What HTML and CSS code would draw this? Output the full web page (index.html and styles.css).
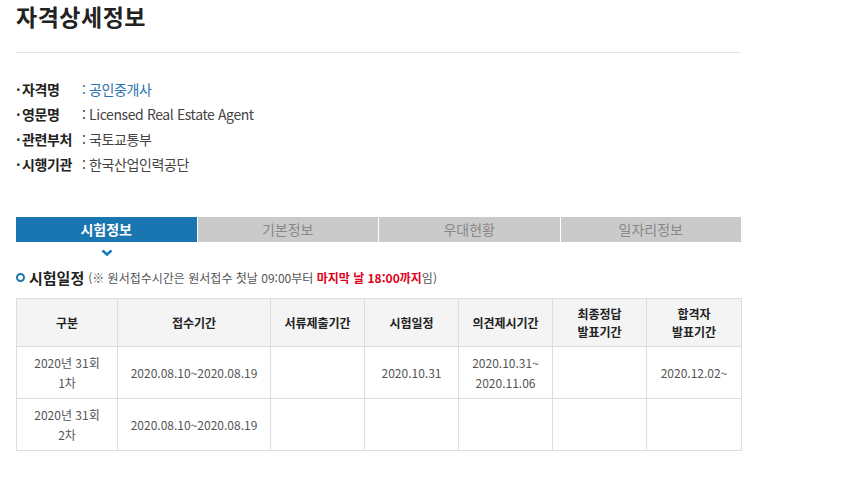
FILE: index.html
```html
<!DOCTYPE html>
<html lang="ko">
<head>
<meta charset="utf-8">
<link rel="stylesheet" href="styles.css">
</head>
<body>
<div class="page">
  <h1 class="title">자격상세정보</h1>
  <ul class="info">
    <li><span class="label">자격명</span><span class="val link">: 공인중개사</span></li>
    <li><span class="label">영문명</span><span class="val">: Licensed Real Estate Agent</span></li>
    <li><span class="label">관련부처</span><span class="val">: 국토교통부</span></li>
    <li><span class="label">시행기관</span><span class="val">: 한국산업인력공단</span></li>
  </ul>
  <div class="tabs">
    <div class="tab active">시험정보</div>
    <div class="tab">기본정보</div>
    <div class="tab">우대현황</div>
    <div class="tab">일자리정보</div>
  </div>
  <div class="chev-row">
    <svg class="chev" width="12" height="8" viewBox="0 0 12 8"><path d="M1.5 1.5 L6 5.5 L10.5 1.5" fill="none" stroke="#1a7ab8" stroke-width="2.6"/></svg>
  </div>
  <div class="sched-head">
    <span class="bullet"></span><span class="sched-title">시험일정</span>
    <span class="note">(※ 원서접수시간은 원서접수 첫날 09:00부터 <b class="red">마지막 날 18:00까지</b>임)</span>
  </div>
  <table class="sched">
    <colgroup>
      <col class="c1"><col class="c2"><col class="c3"><col class="c4"><col class="c5"><col class="c6"><col class="c7">
    </colgroup>
    <thead>
      <tr><th>구분</th><th>접수기간</th><th>서류제출기간</th><th>시험일정</th><th>의견제시기간</th><th>최종정답<br>발표기간</th><th>합격자<br>발표기간</th></tr>
    </thead>
    <tbody>
      <tr><td>2020년 31회<br>1차</td><td>2020.08.10~2020.08.19</td><td></td><td>2020.10.31</td><td>2020.10.31~<br>2020.11.06</td><td></td><td>2020.12.02~</td></tr>
      <tr><td>2020년 31회<br>2차</td><td>2020.08.10~2020.08.19</td><td></td><td></td><td></td><td></td><td></td></tr>
    </tbody>
  </table>
</div>
</body>
</html>
```
FILE: styles.css
```css
html, body { margin: 0; padding: 0; background: #fff; }
body { font-family: "Noto Sans CJK KR", "Noto Sans", sans-serif; color: #333; }
.page { width: 725px; padding: 0 0 0 16px; }
.title { margin: 0; padding-top: 0; height: 52px; line-height: 32px; font-size: 23px; font-weight: 700; color: #222; border-bottom: 1px solid #e5e5e5; letter-spacing: 0.5px; }
.info { list-style: none; margin: 24px 0 0; padding: 0; }
.info li { height: 25px; line-height: 25px; font-size: 14px; display: flex; letter-spacing: -0.4px; }
.info li::before { content: "·"; width: 6px; font-weight: 700; color: #333; }
.label { width: 60px; font-weight: 700; color: #222; }
.val { color: #444; font-weight: 400; }
.val.link { color: #2a73b0; }
.tabs { display: flex; margin-top: 40px; gap: 1px; }
.tab { flex: 1; height: 25px; line-height: 25px; text-align: center; background: #cacaca; color: #888; font-size: 14px; }
.tab.active { background: #1a76b0; color: #fff; font-weight: 700; }
.chev-row { height: 22px; width: 181px; display: flex; justify-content: center; align-items: flex-start; padding-top: 7px; box-sizing: border-box; }
.sched-head { display: flex; align-items: center; height: 26px; font-size: 12px; color: #555; }
.bullet { width: 5px; height: 5px; border: 2px solid #1a76b0; border-radius: 50%; margin-right: 4px; }
.sched-title { font-size: 15px; font-weight: 700; color: #222; margin-right: 4px; }
.red { color: #e1001b; font-weight: 700; }
.sched { margin-top: 8px; width: 725px; border-collapse: collapse; table-layout: fixed; font-size: 12px; }
.sched th, .sched td { border: 1px solid #ddd; text-align: center; vertical-align: middle; padding: 0; }
.sched th { background: #f4f4f4; height: 47px; font-weight: 700; color: #222; font-size: 12px; line-height: 18px; }
.sched td { height: 51px; color: #555; line-height: 20px; }
.c1 { width: 101px; } .c2 { width: 153px; } .c3 { width: 94px; } .c4 { width: 94px; } .c5 { width: 94px; } .c6 { width: 94px; } .c7 { width: 95px; }
```
